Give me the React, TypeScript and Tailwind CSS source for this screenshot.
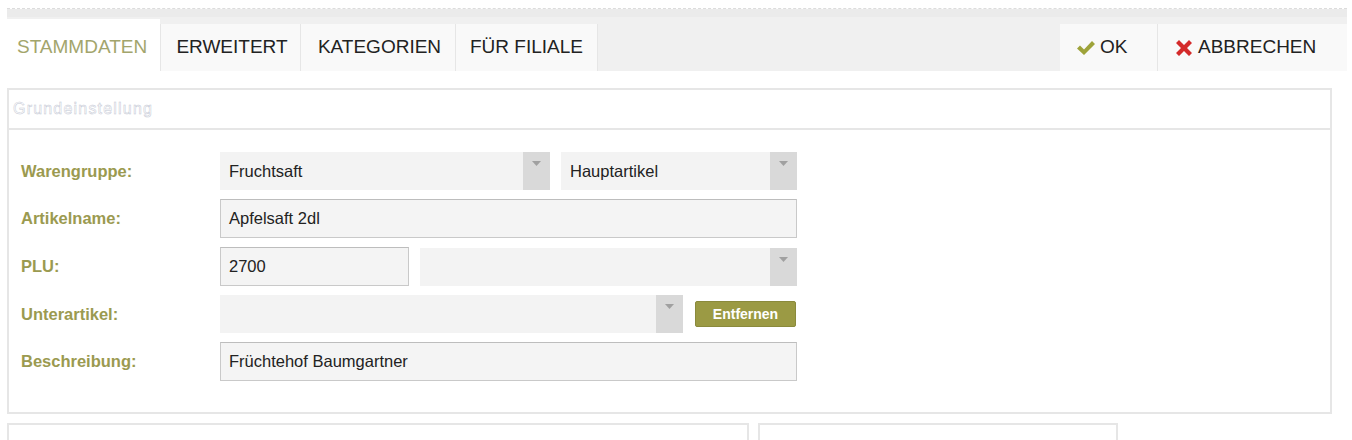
import React from "react";

const Arrow = () => (
  <div className="w-[27px] h-full bg-[#d9d9d9] flex justify-center pt-[9px]">
    <svg width="9" height="5" viewBox="0 0 9 5">
      <path d="M0 0 L9 0 L4.5 5 Z" fill="#a0a0a0" />
    </svg>
  </div>
);

const Select = ({ w, value }: { w: string; value?: string }) => (
  <div className={`${w} h-[38px] bg-[#f3f3f3] flex`}>
    <div className="flex-1 flex items-center pl-[9px] text-[16.5px] text-[#222]">{value}</div>
    <Arrow />
  </div>
);

const Input = ({ w, value }: { w: string; value?: string }) => (
  <div className={`${w} h-[39px] bg-[#f4f4f4] border border-[#c9c9c9] border-t-[#bdbdbd] flex items-center pl-[8px] text-[16.5px] text-[#222]`}>
    {value}
  </div>
);

const Label = ({ children }: { children: React.ReactNode }) => (
  <div className="w-[199px] text-[16.5px] font-bold text-[#9b9a50]">{children}</div>
);

export default function App() {
  return (
    <div className="w-[1352px] h-[440px] bg-white overflow-hidden" style={{ fontFamily: '"Liberation Sans", Arial, sans-serif' }}>
      <div className="h-[8px]" />
      <div className="ml-[7px] mr-[5px] border-t border-dashed border-[#dcdcdc]">
        <div className="h-[8px] bg-[#ebebeb]" />
        <div className="h-[54px] bg-[#f0f0f0] flex items-end">
          <div className="w-[153px] h-[52px] bg-white flex items-center pl-[10px] pt-[4px] text-[19px] text-[#a3a56c]">STAMMDATEN</div>
          <div className="w-[140px] h-[47px] bg-[#f9f9f9] border-l border-[#e6e6e6] flex items-center justify-center pl-[3px] text-[19px] text-[#222]">ERWEITERT</div>
          <div className="w-[155px] h-[47px] bg-[#f9f9f9] border-l border-[#e6e6e6] flex items-center justify-center pl-[3px] text-[19px] text-[#222]">KATEGORIEN</div>
          <div className="w-[143px] h-[47px] bg-[#f9f9f9] border-l border-r border-[#e6e6e6] flex items-center justify-center text-[19px] text-[#222]">FÜR FILIALE</div>
          <div className="flex-1" />
          <div className="w-[98px] h-[47px] bg-[#f9f9f9] border-r border-[#e6e6e6] flex items-center pl-[16px] gap-[4px] text-[19px] text-[#222]">
            <svg width="20" height="16" viewBox="0 0 20 16">
              <path d="M1 8.5 L4 5.5 L8 9.5 L16 1 L19 4 L8 15 Z" fill="#9ea33a" />
            </svg>
            OK
          </div>
          <div className="w-[189px] h-[47px] bg-[#f9f9f9] flex items-center pl-[17px] gap-[5px] text-[19px] text-[#222]">
            <svg width="18" height="18" viewBox="0 0 18 18">
              <path d="M1 4 L4 1 L9 6 L14 1 L17 4 L12 9 L17 14 L14 17 L9 12 L4 17 L1 14 L6 9 Z" fill="#d42a2a" />
            </svg>
            ABBRECHEN
          </div>
        </div>
      </div>
      <div className="h-[17px]" />
      <div className="ml-[7px] w-[1325px] h-[326px] border-2 border-[#e6e6e6]">
        <div className="h-[40px] border-b-2 border-[#e6e6e6] flex items-center pl-[4px] text-[16px] tracking-[1.2px] text-white" style={{ WebkitTextStroke: "0.5px #c4c8d4" }}>
          Grundeinstellung
        </div>
        <div className="pl-[12px] pt-[22px] flex flex-col gap-[9px]">
          <div className="flex items-center">
            <Label>Warengruppe:</Label>
            <Select w="w-[330px]" value="Fruchtsaft" />
            <div className="w-[11px]" />
            <Select w="w-[236px]" value="Hauptartikel" />
          </div>
          <div className="flex items-center">
            <Label>Artikelname:</Label>
            <Input w="w-[577px]" value="Apfelsaft 2dl" />
          </div>
          <div className="flex items-center">
            <Label>PLU:</Label>
            <Input w="w-[189px]" value="2700" />
            <div className="w-[11px]" />
            <Select w="w-[377px]" />
          </div>
          <div className="flex items-center">
            <Label>Unterartikel:</Label>
            <Select w="w-[463px]" />
            <div className="w-[12px]" />
            <div className="w-[101px] h-[26px] bg-[#9b9a44] border border-[#8a8a3c] rounded-[2px] flex items-center justify-center text-[14px] font-bold text-white">Entfernen</div>
          </div>
          <div className="flex items-center">
            <Label>Beschreibung:</Label>
            <Input w="w-[577px]" value="Früchtehof Baumgartner" />
          </div>
        </div>
      </div>
      <div className="h-[9px]" />
      <div className="flex">
        <div className="ml-[7px] w-[742px] h-[40px] border-2 border-[#e6e6e6]" />
        <div className="ml-[9px] w-[360px] h-[40px] border-2 border-[#e6e6e6]" />
      </div>
    </div>
  );
}
